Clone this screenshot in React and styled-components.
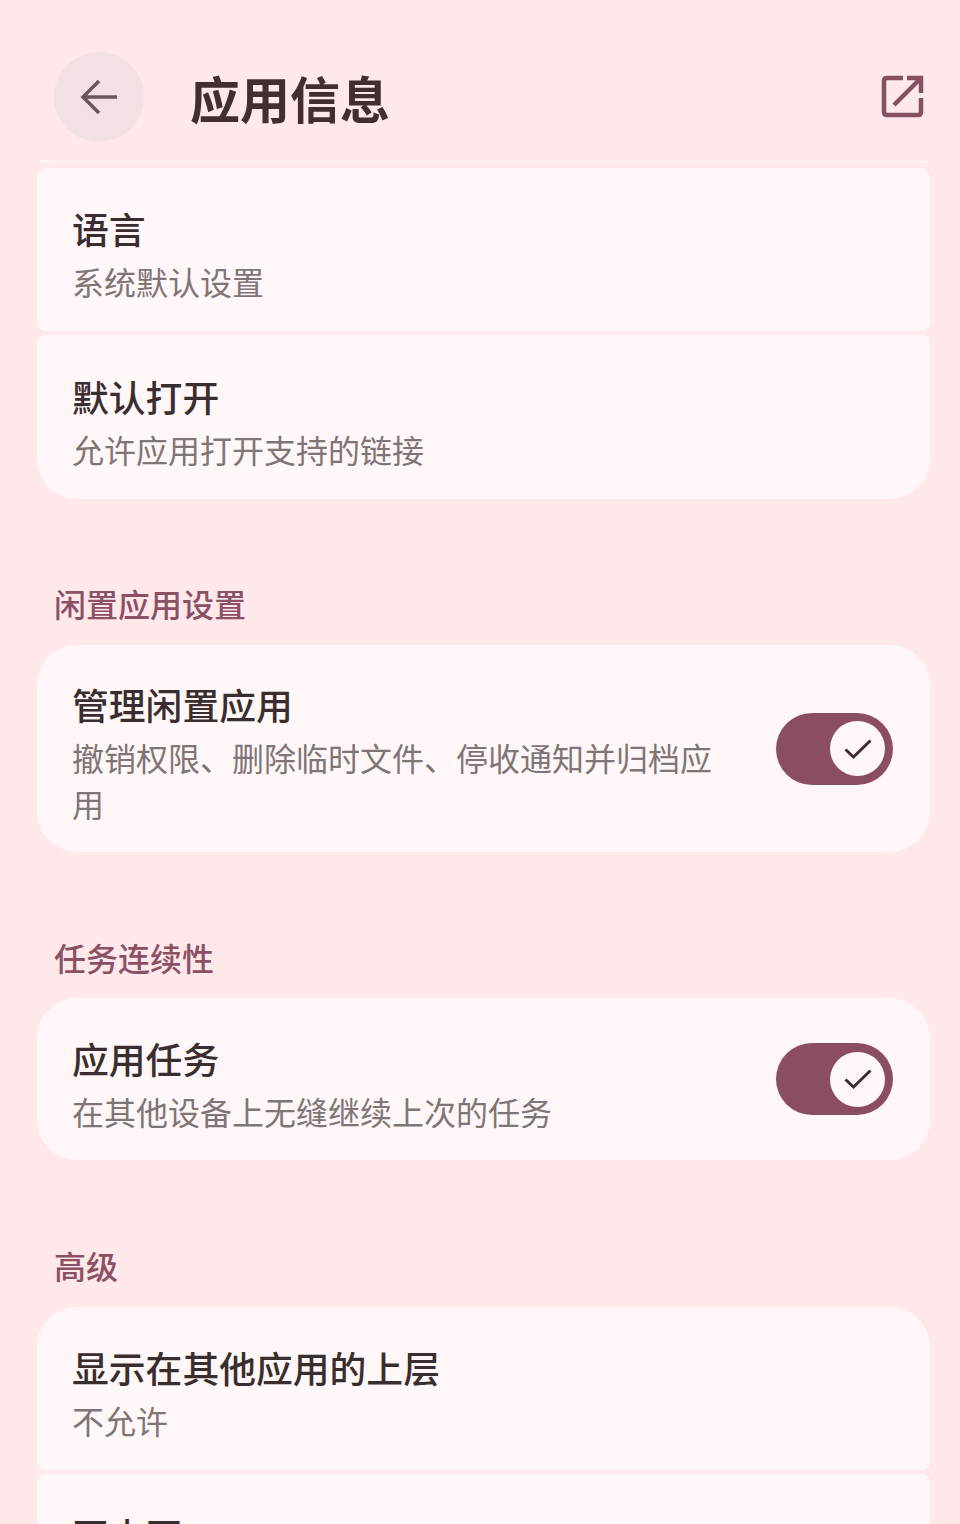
import React from 'react';
import styled, { createGlobalStyle } from 'styled-components';

const GlobalStyle = createGlobalStyle`
  html, body {
    margin: 0;
    padding: 0;
    background: #fee8ea;
  }
`;

const Page = styled.div`
  width: 960px;
  height: 1524px;
  overflow: hidden;
  background: #fee8ea;
  font-family: 'Noto Sans CJK SC', 'Noto Sans', sans-serif;
  color: #3b2b2e;
`;

const Header = styled.header`
  display: flex;
  align-items: center;
  height: 90px;
  padding: 52px 36px 0 54px;
`;

const BackButton = styled.div`
  width: 90px;
  height: 90px;
  border-radius: 50%;
  background: #f3e0e3;
  display: flex;
  align-items: center;
  justify-content: center;
  color: #6c5559;
`;

const Title = styled.h1`
  flex: 1;
  margin: 0 0 0 46px;
  font-size: 50px;
  line-height: 90px;
  font-weight: 600;
  color: #402e31;
`;

const Divider = styled.div`
  height: 3px;
  margin: 18px 34px 5px 40px;
  background: #fff3f4;
`;

const Group = styled.section`
  display: flex;
  flex-direction: column;
  gap: 4px;
  margin: 0 30px 0 37px;
`;

const Row = styled.div`
  display: flex;
  align-items: center;
  justify-content: space-between;
  box-sizing: border-box;
  min-height: ${p => p.$height}px;
  padding: 0 37px 0 35px;
  background: #fff7f7;
  border-radius: ${p => p.$radius};
`;

const RowText = styled.div`
  width: ${p => (p.$narrow ? '648px' : 'auto')};
  padding-top: 10px;
`;

const RowTitle = styled.div`
  font-size: 36.8px;
  line-height: 46px;
  font-weight: 500;
  color: #3a2d30;
`;

const RowSub = styled.div`
  font-size: 32px;
  line-height: 46px;
  margin-top: 7px;
  color: #7f7476;
`;

const SectionLabel = styled.h2`
  margin: ${p => p.$top}px 0 ${p => p.$bottom}px 54px;
  font-size: 32px;
  line-height: 46px;
  font-weight: 500;
  color: #8c5064;
`;

const Track = styled.div`
  width: 117px;
  height: 72px;
  border-radius: 36px;
  background: #8b4e61;
  display: flex;
  align-items: center;
  justify-content: flex-end;
  padding-right: 8px;
  box-sizing: border-box;
  color: #3f2b30;
`;

const Thumb = styled.div`
  width: 55px;
  height: 55px;
  border-radius: 50%;
  background: #fff7f7;
  display: flex;
  align-items: center;
  justify-content: center;
`;

function Toggle() {
  return (
    <Track>
      <Thumb>
        <svg width="28" height="22" viewBox="0 0 28 22" fill="none" stroke="currentColor" strokeWidth="3">
          <path d="M1.5 11.5 L9.5 19 L26.5 2.5" />
        </svg>
      </Thumb>
    </Track>
  );
}

function App() {
  return (
    <Page>
      <GlobalStyle />
      <Header>
        <BackButton>
          <svg width="38" height="36" viewBox="0 0 38 36" fill="none" stroke="currentColor" strokeWidth="3.5">
            <path d="M37 18 H3 M19 2 L3 18 L19 34" />
          </svg>
        </BackButton>
        <Title>应用信息</Title>
        <svg width="44" height="44" viewBox="0 0 44 44" fill="none" stroke="#85505f" strokeWidth="4.5">
          <path d="M23 3 H7 Q4 3 4 6 V37 Q4 40 7 40 H38 Q41 40 41 37 V23" />
          <path d="M27 3 H41 V18 M41 3 L14 30" />
        </svg>
      </Header>
      <Divider />

      <Group>
        <Row $height={163} $radius="10px 10px 8px 8px">
          <RowText>
            <RowTitle>语言</RowTitle>
            <RowSub>系统默认设置</RowSub>
          </RowText>
        </Row>
        <Row $height={164} $radius="8px 8px 40px 40px">
          <RowText>
            <RowTitle>默认打开</RowTitle>
            <RowSub>允许应用打开支持的链接</RowSub>
          </RowText>
        </Row>
      </Group>

      <SectionLabel $top={81} $bottom={19}>闲置应用设置</SectionLabel>
      <Group>
        <Row $height={207} $radius="40px">
          <RowText $narrow>
            <RowTitle>管理闲置应用</RowTitle>
            <RowSub>撤销权限、删除临时文件、停收通知并归档应用</RowSub>
          </RowText>
          <Toggle />
        </Row>
      </Group>

      <SectionLabel $top={82} $bottom={18}>任务连续性</SectionLabel>
      <Group>
        <Row $height={162} $radius="40px">
          <RowText>
            <RowTitle>应用任务</RowTitle>
            <RowSub>在其他设备上无缝继续上次的任务</RowSub>
          </RowText>
          <Toggle />
        </Row>
      </Group>

      <SectionLabel $top={82} $bottom={19}>高级</SectionLabel>
      <Group>
        <Row $height={163} $radius="40px 40px 8px 8px">
          <RowText>
            <RowTitle>显示在其他应用的上层</RowTitle>
            <RowSub>不允许</RowSub>
          </RowText>
        </Row>
        <Row $height={163} $radius="8px 8px 40px 40px">
          <RowText>
            <RowTitle>画中画</RowTitle>
            <RowSub>不允许</RowSub>
          </RowText>
        </Row>
      </Group>
    </Page>
  );
}

export default App;
